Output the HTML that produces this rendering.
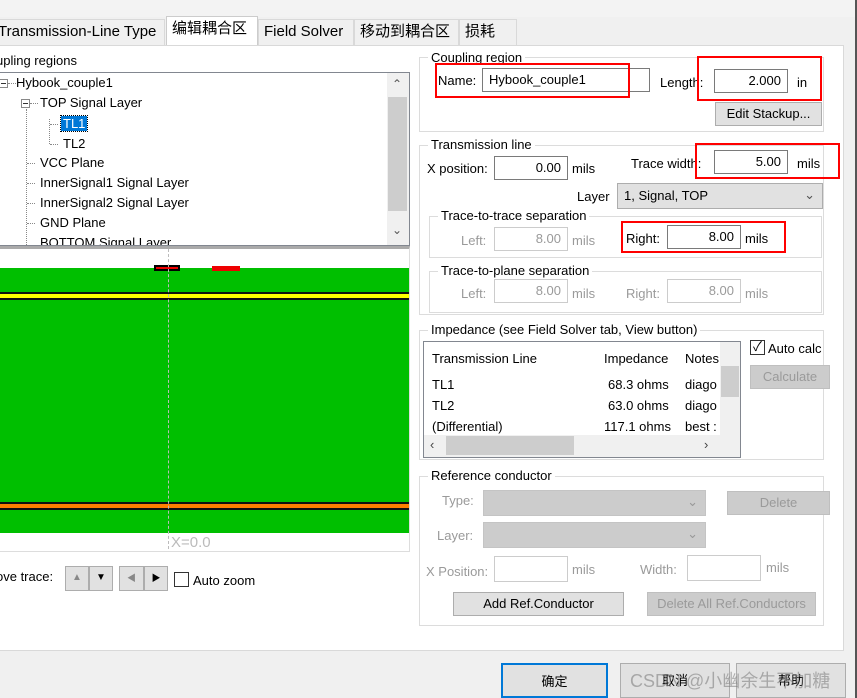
<!DOCTYPE html>
<html><head><meta charset="utf-8"><style>
*{box-sizing:border-box;margin:0;padding:0}
body{width:857px;height:698px;overflow:hidden;background:#f0f0f0;font-family:"Liberation Sans","Noto Sans CJK SC",sans-serif;font-size:13px;color:#000;position:relative}
.a{position:absolute;white-space:nowrap}
.tab{position:absolute;top:19px;height:26px;border:1px solid #d9d9d9;border-bottom:none;background:#f0f0f0;font-size:15px;line-height:24px;padding:0 5px}
.grp{position:absolute;border:1px solid #dcdcdc}
.gl{position:absolute;top:-9px;left:8px;background:#fff;padding:0 3px;font-size:13px}
.inp{position:absolute;height:24px;border:1px solid #7a7a7a;background:#fff;text-align:right;padding:3px 6px;font-size:13px}
.dis{border-color:#ccc;color:#9a9a9a}
.g{color:#9a9a9a}
.btn{position:absolute;border:1px solid #adadad;background:#e1e1e1;text-align:center;font-size:13px}
.btnd{background:#cccccc;border-color:#bfbfbf;color:#9a9a9a}
.red{position:absolute;border:2px solid #f00}
.pm{position:absolute;width:9px;height:9px;border:1px solid #888;background:#fff}
.pm:after{content:"";position:absolute;left:1px;top:3px;width:5px;height:1px;background:#333}
.hd{position:absolute;width:8px;border-top:1px dotted #888}
</style></head><body>
<div class="a" style="left:0;top:0;width:857px;height:17px;background:#f3f3f3"></div>
<div class="a" style="left:855px;top:0;width:2px;height:698px;background:#555"></div>
<div class="tab" style="left:-8px;width:173px">Transmission-Line Type</div>
<div class="tab" style="left:166px;top:16px;height:30px;width:92px;background:#fff;border-color:#ccc">编辑耦合区</div>
<div class="tab" style="left:258px;width:96px">Field Solver</div>
<div class="tab" style="left:354px;width:105px">移动到耦合区</div>
<div class="tab" style="left:459px;width:58px">损耗</div>
<div class="a" style="left:0;top:45px;width:844px;height:606px;background:#fff;border:1px solid #d9d9d9;border-left:none"></div>
<div class="a" style="left:-4px;top:53px;font-size:13px">upling regions</div>
<div class="a" style="left:-2px;top:72px;width:412px;height:174px;border:1px solid #828790;background:#fff;overflow:hidden">
 <div class="a" style="left:388px;top:0;width:22px;height:172px;background:#f0f0f0"></div>
 <div class="a" style="left:389px;top:24px;width:19px;height:114px;background:#cdcdcd"></div>
 <div class="a" style="left:393px;top:4px;color:#555;font-size:12px">&#8963;</div>
 <div class="a" style="left:393px;top:150px;color:#555;font-size:12px">&#8964;</div>
 <div class="pm" style="left:0;top:6px"></div><div class="hd" style="left:9px;top:10px"></div>
 <div class="a" style="left:17px;top:2px">Hybook_couple1</div>
 <div class="pm" style="left:22px;top:26px"></div><div class="hd" style="left:31px;top:30px"></div>
 <div class="a" style="left:41px;top:22px">TOP Signal Layer</div>
 <div class="a" style="left:62px;top:43px;background:#0078d7;color:#fff;padding:0 2px;outline:1px dotted #000">TL1</div>
 <div class="a" style="left:64px;top:63px">TL2</div>
 <div class="a" style="left:41px;top:82px">VCC Plane</div>
 <div class="a" style="left:41px;top:102px">InnerSignal1 Signal Layer</div>
 <div class="a" style="left:41px;top:122px">InnerSignal2 Signal Layer</div>
 <div class="a" style="left:41px;top:142px">GND Plane</div>
 <div class="a" style="left:41px;top:162px">BOTTOM Signal Layer</div>
 <div class="a" style="left:27px;top:36px;height:140px;border-left:1px dotted #888"></div>
 <div class="hd" style="left:28px;top:90px"></div><div class="hd" style="left:28px;top:110px"></div>
 <div class="hd" style="left:28px;top:130px"></div><div class="hd" style="left:28px;top:150px"></div>
 <div class="a" style="left:50px;top:46px;height:25px;border-left:1px dotted #888"></div>
 <div class="hd" style="left:51px;top:51px"></div><div class="hd" style="left:51px;top:71px"></div>
</div>
<div class="a" style="left:-2px;top:246px;width:412px;height:306px;border:1px solid #ddd;border-top:3px solid #aaa;background:#fff">
 <div class="a" style="left:0;top:19px;width:410px;height:265px;background:#00bf00"></div>
 <div class="a" style="left:0;top:43px;width:410px;height:8px;background:#ff0;border-top:2px solid #111;border-bottom:2px solid #111"></div>
 <div class="a" style="left:0;top:253px;width:410px;height:8px;background:#ff8000;border-top:2px solid #111;border-bottom:2px solid #111"></div>
 <div class="a" style="left:155px;top:16px;width:26px;height:6px;background:#e00;border:2px solid #000"></div>
 <div class="a" style="left:213px;top:17px;width:28px;height:5px;background:#e00"></div>
 <div class="a" style="left:169px;top:0;height:300px;border-left:1px dashed #bbb"></div>
 <div class="a" style="left:172px;top:285px;color:#bbb;font-size:15px">X=0.0</div>
</div>
<div class="a" style="left:-4px;top:569px">ove trace:</div>
<div class="btn" style="left:65px;top:566px;width:24px;height:25px;color:#888;font-size:10px;line-height:22px">▲</div>
<div class="btn" style="left:89px;top:566px;width:24px;height:25px;font-size:10px;line-height:22px">▼</div>
<div class="btn" style="left:119px;top:566px;width:25px;height:25px;color:#888;font-size:9px;line-height:22px">◀</div>
<div class="btn" style="left:144px;top:566px;width:24px;height:25px;font-size:9px;line-height:22px">▶</div>
<div class="a" style="left:174px;top:572px;width:15px;height:15px;border:1px solid #333;background:#fff"></div>
<div class="a" style="left:193px;top:573px">Auto zoom</div>
<div class="grp" style="left:419px;top:57px;width:405px;height:75px"><span class="gl" style="top:-8px">Coupling region</span></div>
<div class="a" style="left:438px;top:73px">Name:</div>
<div class="inp" style="left:482px;top:68px;width:168px;text-align:left">Hybook_couple1</div>
<div class="a" style="left:660px;top:75px">Length:</div>
<div class="inp" style="left:714px;top:69px;width:74px">2.000</div>
<div class="a" style="left:797px;top:75px">in</div>
<div class="btn" style="left:715px;top:102px;width:107px;height:24px;line-height:22px">Edit Stackup...</div>
<div class="grp" style="left:419px;top:145px;width:405px;height:170px"><span class="gl" style="top:-9px">Transmission line</span></div>
<div class="a" style="left:427px;top:161px">X position:</div>
<div class="inp" style="left:494px;top:156px;width:74px">0.00</div>
<div class="a" style="left:572px;top:161px">mils</div>
<div class="a" style="left:631px;top:156px">Trace width:</div>
<div class="inp" style="left:714px;top:150px;width:74px">5.00</div>
<div class="a" style="left:797px;top:156px">mils</div>
<div class="a" style="left:577px;top:189px">Layer</div>
<div class="a" style="left:617px;top:183px;width:206px;height:26px;background:#e1e1e1;border:1px solid #adadad;padding:4px 6px">1, Signal, TOP<span style="position:absolute;right:7px;top:3px;color:#555">&#8964;</span></div>
<div class="grp" style="left:429px;top:216px;width:393px;height:42px"><span class="gl" style="top:-9px;background:#fff">Trace-to-trace separation</span></div>
<div class="a g" style="left:461px;top:233px">Left:</div>
<div class="inp dis" style="left:494px;top:227px;width:74px">8.00</div>
<div class="a g" style="left:572px;top:233px">mils</div>
<div class="a" style="left:626px;top:231px">Right:</div>
<div class="inp" style="left:667px;top:225px;width:74px">8.00</div>
<div class="a" style="left:745px;top:231px">mils</div>
<div class="grp" style="left:429px;top:271px;width:393px;height:42px"><span class="gl" style="top:-9px">Trace-to-plane separation</span></div>
<div class="a g" style="left:461px;top:286px">Left:</div>
<div class="inp dis" style="left:494px;top:279px;width:74px">8.00</div>
<div class="a g" style="left:572px;top:286px">mils</div>
<div class="a g" style="left:626px;top:286px">Right:</div>
<div class="inp dis" style="left:667px;top:279px;width:74px">8.00</div>
<div class="a g" style="left:745px;top:286px">mils</div>
<div class="grp" style="left:419px;top:330px;width:405px;height:130px"><span class="gl" style="top:-9px">Impedance (see Field Solver tab, View button)</span></div>
<div class="a" style="left:423px;top:341px;width:318px;height:117px;border:1px solid #828790;background:#fff;overflow:hidden">
 <div class="a" style="left:8px;top:9px">Transmission Line</div>
 <div class="a" style="left:180px;top:9px">Impedance</div>
 <div class="a" style="left:261px;top:9px">Notes</div>
 <div class="a" style="left:8px;top:35px">TL1</div><div class="a" style="left:184px;top:35px">68.3 ohms</div><div class="a" style="left:261px;top:35px">diago</div>
 <div class="a" style="left:8px;top:56px">TL2</div><div class="a" style="left:184px;top:56px">63.0 ohms</div><div class="a" style="left:261px;top:56px">diago</div>
 <div class="a" style="left:8px;top:77px">(Differential)</div><div class="a" style="left:180px;top:77px">117.1 ohms</div><div class="a" style="left:261px;top:77px">best :</div>
 <div class="a" style="left:296px;top:0;width:20px;height:93px;background:#f0f0f0"></div>
 <div class="a" style="left:297px;top:24px;width:18px;height:31px;background:#cdcdcd"></div>
 <div class="a" style="left:0;top:93px;width:316px;height:22px;background:#f0f0f0"></div>
 <div class="a" style="left:22px;top:94px;width:128px;height:19px;background:#cdcdcd"></div>
 <div class="a" style="left:6px;top:95px;color:#444">&lsaquo;</div>
 <div class="a" style="left:280px;top:95px;color:#444">&rsaquo;</div>
</div>
<div class="a" style="left:750px;top:340px;width:15px;height:15px;border:1px solid #333;background:#fff;font-size:13px;line-height:12px;text-align:center">✓</div>
<div class="a" style="left:768px;top:341px">Auto calc</div>
<div class="btn btnd" style="left:750px;top:365px;width:80px;height:24px;line-height:22px">Calculate</div>
<div class="grp" style="left:419px;top:476px;width:405px;height:150px"><span class="gl" style="top:-9px">Reference conductor</span></div>
<div class="a g" style="left:442px;top:493px">Type:</div>
<div class="a" style="left:483px;top:490px;width:223px;height:26px;background:#ccc;border:1px solid #c4c4c4"><span style="position:absolute;right:7px;top:3px;color:#999">&#8964;</span></div>
<div class="btn btnd" style="left:727px;top:491px;width:103px;height:24px;line-height:22px">Delete</div>
<div class="a g" style="left:437px;top:528px">Layer:</div>
<div class="a" style="left:483px;top:522px;width:223px;height:26px;background:#ccc;border:1px solid #c4c4c4"><span style="position:absolute;right:7px;top:3px;color:#999">&#8964;</span></div>
<div class="a g" style="left:426px;top:564px">X Position:</div>
<div class="a" style="left:494px;top:556px;width:74px;height:26px;border:1px solid #ccc;background:#fff"></div>
<div class="a g" style="left:572px;top:562px">mils</div>
<div class="a g" style="left:640px;top:562px">Width:</div>
<div class="a" style="left:687px;top:555px;width:74px;height:26px;border:1px solid #ccc;background:#fff"></div>
<div class="a g" style="left:766px;top:560px">mils</div>
<div class="btn" style="left:453px;top:592px;width:171px;height:24px;line-height:22px">Add Ref.Conductor</div>
<div class="btn btnd" style="left:647px;top:592px;width:169px;height:24px;line-height:22px">Delete All Ref.Conductors</div>
<div class="red" style="left:435px;top:63px;width:195px;height:35px"></div>
<div class="red" style="left:697px;top:56px;width:125px;height:45px"></div>
<div class="red" style="left:695px;top:143px;width:145px;height:36px"></div>
<div class="red" style="left:621px;top:221px;width:165px;height:32px"></div>
<div class="btn" style="left:501px;top:663px;width:107px;height:35px;border:2px solid #0078d7;line-height:33px">确定</div>
<div class="btn" style="left:620px;top:663px;width:110px;height:35px;line-height:33px">取消</div>
<div class="btn" style="left:736px;top:663px;width:110px;height:35px;line-height:33px">帮助</div>
<div class="a" style="left:630px;top:667px;font-size:18px;color:rgba(120,120,120,.55)">CSDN @小幽余生不加糖</div>
</body></html>
